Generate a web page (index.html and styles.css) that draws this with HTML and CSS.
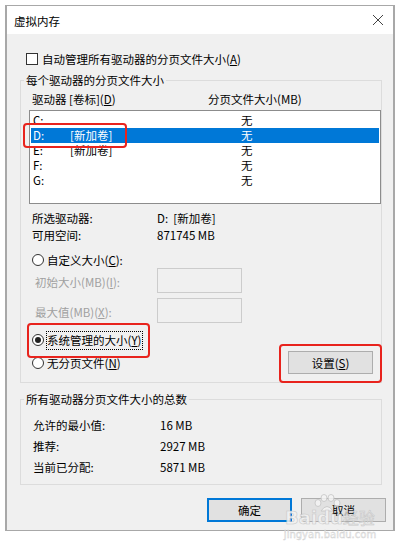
FILE: index.html
```html
<!DOCTYPE html>
<html lang="zh-CN">
<head>
<meta charset="utf-8">
<title>虚拟内存</title>
<link rel="stylesheet" href="styles.css">
</head>
<body>
<div class="window">
  <div class="titlebar">
    <span class="title">虚拟内存</span>
    <svg class="close" width="12" height="12" viewBox="0 0 12 12"><path d="M1 1L11 11M11 1L1 11" stroke="#444" stroke-width="1"/></svg>
  </div>
  <div class="client">
    <div class="check-row"><span class="checkbox"></span><span>自动管理所有驱动器的分页文件大小(<u>A</u>)</span></div>

    <fieldset class="group group1">
      <legend>每个驱动器的分页文件大小</legend>
      <div class="list-header"><span class="hcol1">驱动器 [卷标](<u>D</u>)</span><span>分页文件大小(MB)</span></div>
      <div class="listbox">
        <div class="lrow"><span class="drv">C:</span><span class="lbl"></span><span class="size">无</span></div>
        <div class="lrow selected"><span class="drv">D:</span><span class="lbl">[新加卷]</span><span class="size">无</span></div>
        <div class="lrow"><span class="drv">E:</span><span class="lbl">[新加卷]</span><span class="size">无</span></div>
        <div class="lrow"><span class="drv">F:</span><span class="lbl"></span><span class="size">无</span></div>
        <div class="lrow"><span class="drv">G:</span><span class="lbl"></span><span class="size">无</span></div>
      </div>
      <div class="info-row first"><span class="key">所选驱动器:</span><span>D:&nbsp;&nbsp;[新加卷]</span></div>
      <div class="info-row"><span class="key">可用空间:</span><span>871745 MB</span></div>

      <div class="radio-row custom"><span class="radio"></span><span>自定义大小(<u>C</u>):</span></div>
      <div class="input-row"><span class="dlabel">初始大小(MB)(<u>I</u>):</span><span class="dinput"></span></div>
      <div class="input-row second"><span class="dlabel">最大值(MB)(<u>X</u>):</span><span class="dinput"></span></div>

      <div class="bottom-area">
        <div class="radio-col">
          <div class="radio-row"><span class="radio checked"></span><span class="focus">系统管理的大小(<u>Y</u>)</span></div>
          <div class="radio-row none"><span class="radio"></span><span>无分页文件(<u>N</u>)</span></div>
        </div>
        <div class="btn set-btn">设置(<u>S</u>)</div>
      </div>
    </fieldset>

    <fieldset class="group group2">
      <legend>所有驱动器分页文件大小的总数</legend>
      <div class="total-row"><span class="tkey">允许的最小值:</span><span>16 MB</span></div>
      <div class="total-row"><span class="tkey">推荐:</span><span>2927 MB</span></div>
      <div class="total-row"><span class="tkey">当前已分配:</span><span>5871 MB</span></div>
    </fieldset>

    <div class="buttons">
      <div class="btn ok">确定</div>
      <div class="btn cancel">取消</div>
    </div>
  </div>
</div>

<div class="mark mark1"></div>
<div class="mark mark2"></div>
<div class="mark mark3"></div>

<div class="watermark">
  <svg class="paw" width="30" height="18" viewBox="0 0 30 18">
    <g fill="#f4f4f4" stroke="#c8c8c8" stroke-width="1">
      <ellipse cx="6" cy="9" rx="3" ry="3.5"/>
      <ellipse cx="12" cy="4" rx="3" ry="3.5"/>
      <ellipse cx="19" cy="4" rx="3" ry="3.5"/>
      <ellipse cx="25" cy="9" rx="3" ry="3.5"/>
      <path d="M9 17 Q15 8 21 17 Z"/>
    </g>
  </svg>
  <div class="wm-main"><span>Bai</span><span class="wm-du">du</span><span class="wm-cn">经验</span></div>
  <div class="wm-url">jingyan.baidu.com</div>
</div>
</body>
</html>
```

FILE: styles.css
```css
* { box-sizing: border-box; }

html, body {
  margin: 0;
  padding: 0;
  background: #ffffff;
}

body {
  font-family: "Noto Sans CJK SC", "Microsoft YaHei", sans-serif;
  font-size: 11.5px;
  color: #000;
  line-height: 16px;
}

u { text-decoration: underline; text-underline-offset: 1px; }

.window {
  margin: 5px 0 0 5px;
  width: 390px;
  height: 526px;
  border-top: 1px solid #a8a8a8;
  border-bottom: 1px solid #a8a8a8;
  border-left: 2px solid #a8a8a8;
  border-right: 2px solid #a8a8a8;
  background: #f0f0f0;
  display: flex;
  flex-direction: column;
  position: relative;
}

.titlebar {
  height: 28px;
  background: #ffffff;
  display: flex;
  align-items: center;
  justify-content: space-between;
  padding: 0 9px 0 7px;
}

.title { font-size: 11.5px; padding-top: 1px; }

.close { display: block; }

.client {
  flex: 1;
  display: flex;
  flex-direction: column;
}

.check-row {
  margin: 17px 0 0 19px;
  height: 16px;
  display: flex;
  align-items: center;
  gap: 4px;
}

.checkbox {
  width: 12px;
  height: 12px;
  border: 1px solid #333;
  background: #fff;
}

.group {
  margin: 0 11px 0 13px;
  padding: 0;
  border: 1px solid #dcdcdc;
  min-inline-size: 0;
  width: 362px;
}

.group legend {
  padding: 0 2px;
  margin-left: 3px;
  line-height: 16px;
}

.group1 { margin-top: 5px; padding-bottom: 8px; }

.list-header {
  margin: 3px 0 0 11px;
  height: 16px;
  display: flex;
}

.hcol1 { width: 176px; }

.listbox {
  margin: 3px 0 0 8px;
  height: 94px;
  border: 1px solid #8c8c8c;
  background: #ffffff;
  padding: 2px 1px 0 1px;
}

.lrow {
  height: 15px;
  line-height: 15px;
  display: flex;
  padding-left: 2px;
}

.lrow.selected {
  background: #0078d7;
  color: #ffffff;
}

.drv { width: 37px; }
.lbl { width: 171px; }

.info-row {
  height: 17px;
  line-height: 17px;
  display: flex;
  margin-left: 11px;
}

.info-row.first { margin-top: 6px; }

.key { width: 125px; }

.radio-row {
  height: 16px;
  display: flex;
  align-items: center;
  gap: 3px;
  margin-left: 11px;
}

.radio-row.custom { margin-top: 8px; }

.radio {
  width: 12px;
  height: 12px;
  border: 1px solid #333;
  border-radius: 50%;
  background: #fff;
  display: flex;
  align-items: center;
  justify-content: center;
}

.radio.checked::after {
  content: "";
  width: 6px;
  height: 6px;
  border-radius: 50%;
  background: #222;
}

.input-row {
  height: 25px;
  display: flex;
  align-items: center;
  margin-left: 14px;
}

.input-row.second { margin-top: 5px; }

.dlabel {
  width: 122px;
  color: #a0a0a0;
  padding-top: 2px;
}

.dinput {
  width: 85px;
  height: 25px;
  border: 1px solid #cccccc;
  background: #f0f0f0;
}

.bottom-area {
  display: flex;
  justify-content: space-between;
  margin-top: 9px;
  padding-right: 8px;
}

.radio-col {
  display: flex;
  flex-direction: column;
}

.radio-row.none { margin-top: 7px; }

.focus {
  outline: 1px dotted #000;
  outline-offset: 0;
  height: 17px;
  line-height: 17px;
  padding-right: 1px;
}

.btn {
  height: 23px;
  border: 1px solid #adadad;
  background: #e1e1e1;
  display: flex;
  align-items: center;
  justify-content: center;
}

.set-btn {
  width: 85px;
  margin-top: 19px;
}

.group2 { margin-top: 8px; padding: 8px 0 6px 0; }

.total-row {
  height: 21px;
  line-height: 21px;
  display: flex;
  margin-left: 12px;
}

.tkey { width: 127px; }

.buttons {
  display: flex;
  justify-content: flex-end;
  gap: 9px;
  margin: 13px 7px 0 0;
}

.buttons .btn {
  width: 85px;
  height: 24px;
}

.btn.ok { border: 2px solid #0078d7; }

.mark {
  position: absolute;
  border: 2px solid #e8231d;
  border-radius: 4px;
}

.mark1 { left: 23px; top: 123px; width: 104px; height: 25px; }
.mark2 { left: 27px; top: 323px; width: 123px; height: 35px; }
.mark3 { left: 279px; top: 344px; width: 103px; height: 39px; }

.watermark {
  position: absolute;
  left: 284px;
  top: 494px;
  width: 92px;
  display: flex;
  flex-direction: column;
  align-items: center;
  opacity: 0.85;
}

.paw { display: block; margin-left: -6px; }

.wm-main {
  font-family: "DejaVu Sans", sans-serif;
  font-weight: bold;
  font-size: 18px;
  line-height: 18px;
  color: #f2f2f2;
  -webkit-text-stroke: 0.6px #c4c4c4;
  margin-top: -4px;
  white-space: nowrap;
}

.wm-cn {
  font-family: "Noto Sans CJK SC", sans-serif;
  font-size: 16px;
  font-weight: normal;
}

.wm-url {
  font-family: "DejaVu Sans", sans-serif;
  font-size: 10px;
  line-height: 12px;
  color: #f2f2f2;
  -webkit-text-stroke: 0.4px #c8c8c8;
  margin-top: 2px;
  white-space: nowrap;
}
```
